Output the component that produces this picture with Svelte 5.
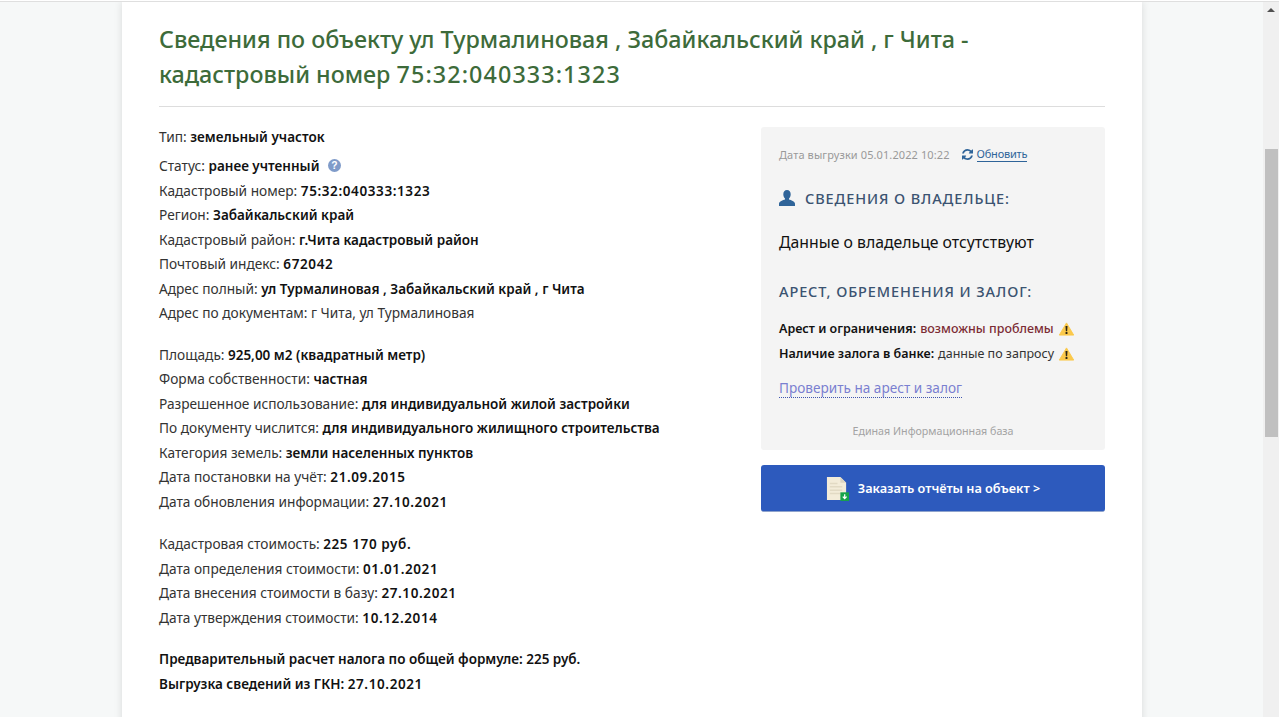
<script lang="ts">
    type Row = { label: string; value: string; plain?: boolean; help?: boolean; allBold?: boolean; num?: boolean };

    const groups: Row[][] = [
        [
            { label: "Тип", value: "земельный участок" },
            { label: "Статус", value: "ранее учтенный", help: true },
            { label: "Кадастровый номер", value: "75:32:040333:1323", num: true },
            { label: "Регион", value: "Забайкальский край" },
            { label: "Кадастровый район", value: "г.Чита кадастровый район" },
            { label: "Почтовый индекс", value: "672042", num: true },
            { label: "Адрес полный", value: "ул Турмалиновая , Забайкальский край , г Чита" },
            { label: "Адрес по документам", value: "г Чита, ул Турмалиновая", plain: true },
        ],
        [
            { label: "Площадь", value: "925,00 м2 (квадратный метр)" },
            { label: "Форма собственности", value: "частная" },
            { label: "Разрешенное использование", value: "для индивидуальной жилой застройки" },
            { label: "По документу числится", value: "для индивидуального жилищного строительства" },
            { label: "Категория земель", value: "земли населенных пунктов" },
            { label: "Дата постановки на учёт", value: "21.09.2015", num: true },
            { label: "Дата обновления информации", value: "27.10.2021", num: true },
        ],
        [
            { label: "Кадастровая стоимость", value: "225 170 руб.", num: true },
            { label: "Дата определения стоимости", value: "01.01.2021", num: true },
            { label: "Дата внесения стоимости в базу", value: "27.10.2021", num: true },
            { label: "Дата утверждения стоимости", value: "10.12.2014", num: true },
        ],
        [
            { label: "Предварительный расчет налога по общей формуле", value: "225 руб.", allBold: true },
            { label: "Выгрузка сведений из ГКН", value: "27.10.2021", allBold: true, num: true },
        ],
    ];
</script>

<div class="viewport">
    <div class="page">
        <main class="card">
            <h1>
                <span class="line">Сведения по объекту ул Турмалиновая , Забайкальский край , г Чита -</span>
                <span class="line"><span>кадастровый номер</span> <span class="h-num">75:32:040333:1323</span></span>
            </h1>
            <div class="columns">
                <section class="details">
                    {#each groups as group}
                        <div class="group">
                            {#each group as row}
                                <div class="row" class:strong={row.allBold}>
                                    {row.label}: <span class:val={!row.plain} class:num={row.num}>{row.value}</span>
                                    {#if row.help}
                                        <svg class="help" viewBox="0 0 12 12" width="13" height="13">
                                            <circle cx="6" cy="6" r="6" fill="#7f9bc9" />
                                            <text x="6" y="9.4" text-anchor="middle" font-size="9.5" font-weight="700" font-family="Liberation Sans, sans-serif" fill="#fff">?</text>
                                        </svg>
                                    {/if}
                                </div>
                            {/each}
                        </div>
                    {/each}
                </section>
                <aside class="side">
                    <div class="panel">
                        <div class="stamp">
                            <span class="stamp-date">Дата выгрузки 05.01.2022 10:22</span>
                            <svg class="refresh" viewBox="0 0 1536 1536" width="11" height="11">
                                <path fill="#2f6499" d="M1511 928q0 5-1 7-64 268-268 434.500T764 1536q-146 0-282.500-55T238 1324l-129 129q-19 19-45 19t-45-19-19-45V960q0-26 19-45t45-19h448q26 0 45 19t19 45-19 45l-137 137q71 66 161 102t187 36q134 0 250-65t186-179q11-17 53-117 8-23 30-23h192q13 0 22.500 9.500t9.500 22.500zM1536 128v448q0 26-19 45t-45 19h-448q-26 0-45-19t-19-45 19-45l138-138Q969 256 768 256q-134 0-250 65T332 500q-11 17-53 117-8 23-30 23H50q-13 0-22.500-9.500T18 608v-7q65-268 270-434.500T768 0q146 0 284 55.500T1297 212l130-129q19-19 45-19t45 19 19 45z" />
                            </svg>
                            <a href="#refresh">Обновить</a>
                        </div>
                        <h2 class="owner">
                            <svg viewBox="0 0 16 16" width="16" height="16">
                                <path fill="#2f6499" d="M8 0c2.300 0 3.700 1.800 3.700 4.200 0 1.700-.7 3.300-1.700 4.200v1.200c1.900.7 6 1.800 6 4.200V16H0v-2.200c0-2.400 4.100-3.500 6-4.200V8.400C5 7.500 4.300 5.900 4.300 4.200 4.300 1.800 5.700 0 8 0z" />
                            </svg>
                            Сведения о владельце:
                        </h2>
                        <p class="empty">Данные о владельце отсутствуют</p>
                        <h2 class="arrest">Арест, обременения и залог:</h2>
                        <div class="check">
                            <b>Арест и ограничения:</b> <span class="danger">возможны проблемы</span>
                            <svg class="warn" viewBox="0 0 16 14" width="15" height="14">
                                <path fill="#fbc94b" d="M8 .5 15.700 13.500H.3z" stroke="#fbc94b" stroke-linejoin="round" />
                                <path fill="#2b2413" d="M6.900 3.800h2.200L8.700 9.400H7.300zM7 10.300h2v1.900H7z" />
                            </svg>
                        </div>
                        <div class="check">
                            <b>Наличие залога в банке:</b> <span>данные по запросу</span>
                            <svg class="warn" viewBox="0 0 16 14" width="15" height="14">
                                <path fill="#fbc94b" d="M8 .5 15.700 13.500H.3z" stroke="#fbc94b" stroke-linejoin="round" />
                                <path fill="#2b2413" d="M6.900 3.800h2.200L8.700 9.400H7.300zM7 10.300h2v1.900H7z" />
                            </svg>
                        </div>
                        <a class="verify" href="#verify">Проверить на арест и залог</a>
                        <div class="base">Единая Информационная база</div>
                    </div>
                    <button class="order">
                        <svg viewBox="0 0 24 26" width="23" height="25">
                            <path fill="#f3ecd9" d="M1 1h14l6 6v18H1z" />
                            <path fill="#dcd5c2" d="M15 1l6 6h-6z" />
                            <path fill="#e2dac4" d="M4 7h8v1.500H4zM4 10.500h13V12H4zM4 14h13v1.500H4zM4 17.500h11V19H4z" />
                            <rect x="15" y="17" width="9" height="9" fill="#17a34a" />
                            <path fill="none" stroke="#fff" stroke-width="1.300" d="M19.500 19v4.500M17.500 21.500l2 2 2-2" />
                        </svg>
                        Заказать отчёты на объект &gt;
                    </button>
                </aside>
            </div>
        </main>
    </div>
    <div class="scrollbar">
        <div class="arrow"></div>
        <div class="track"><div class="thumb"></div></div>
    </div>
</div>

<style>
    :global(body) {
        margin: 0;
        overflow: hidden;
    }

    .viewport {
        display: flex;
        height: 717px;
        box-sizing: border-box;
        padding-top: 1px;
        overflow: hidden;
        font-family: "Noto Sans", "Open Sans", sans-serif;
        color: #222;
    }

    .viewport > * {
        border-top: 1px solid #dfdfdf;
    }

    .page {
        flex: 1;
        min-width: 0;
        overflow: hidden;
        background: #f6f8f8;
        display: flex;
        justify-content: center;
        padding-left: 1px;
    }

    .card {
        width: 1020px;
        height: 800px;
        flex: none;
        background: #fff;
        box-sizing: border-box;
        padding: 20px 37px 0;
        box-shadow: 0 0 8px rgba(0, 0, 0, 0.12);
    }

    h1 {
        margin: 0;
        padding-bottom: 14px;
        border-bottom: 1px solid #ddd;
        font-size: 23.300px;
        line-height: 35px;
        font-weight: 500;
        color: #3d6b3a;
    }

    .line {
        display: block;
    }

    .h-num {
        letter-spacing: 1.100px;
    }

    .columns {
        display: flex;
        justify-content: space-between;
        padding-top: 18px;
    }

    .details {
        width: 560px;
        font-size: 13.7px;
        color: #333;
    }

    .group {
        margin-bottom: 17px;
    }

    .group:nth-child(2) {
        margin-bottom: 18px;
    }

    .row {
        line-height: 24.500px;
    }

    .group:first-child .row:first-child {
        margin-bottom: 4.500px;
    }

    .val,
    .strong {
        font-size: 13.500px;
        font-weight: 600;
        color: #111;
    }

    .num {
        letter-spacing: 0.6px;
    }

    .help {
        margin-left: 5px;
        vertical-align: -1px;
    }

    .side {
        width: 344px;
        padding-top: 2px;
    }

    .panel {
        height: 323px;
        box-sizing: border-box;
        padding: 19px 18px 0;
        background: #f4f4f4;
        border-radius: 3px;
    }

    .stamp {
        display: flex;
        align-items: center;
        font-size: 11px;
        line-height: 15px;
        color: #999;
    }

    .stamp-date {
        letter-spacing: 0.1px;
    }

    .refresh {
        margin-left: 12px;
        margin-right: 4px;
    }

    .stamp a {
        color: #2f6499;
        letter-spacing: -0.2px;
        text-decoration: none;
        border-bottom: 1px solid #2f6499;
    }

    h2 {
        margin: 0;
        font-size: 14.500px;
        font-weight: 500;
        letter-spacing: 0.9px;
        text-transform: uppercase;
        color: #3b5371;
    }

    .owner {
        display: flex;
        align-items: center;
        gap: 10px;
        margin-top: 26px;
        line-height: 20px;
    }

    .empty {
        margin: 24px 0 0;
        font-size: 15.800px;
        line-height: 20px;
        color: #111;
    }

    .arrest {
        margin-top: 29px;
        margin-bottom: 15px;
        line-height: 20px;
    }

    .check {
        display: flex;
        align-items: center;
        gap: 4px;
        font-size: 12.500px;
        line-height: 25px;
        color: #333;
    }

    .check b {
        font-weight: 600;
        color: #111;
    }

    .danger {
        color: #7c2c34;
        font-weight: 500;
    }

    .warn {
        margin-left: 1px;
    }

    .verify {
        display: inline-block;
        margin-top: 12px;
        font-size: 13.600px;
        line-height: 19px;
        color: #7a7fd0;
        text-decoration: none;
        border-bottom: 1px dotted #3f55b0;
    }

    .base {
        margin-top: 26px;
        text-align: center;
        font-size: 10.700px;
        color: #a3a3a3;
    }

    .order {
        display: flex;
        align-items: center;
        justify-content: center;
        gap: 9px;
        width: 100%;
        height: 47px;
        margin-top: 15px;
        padding: 0;
        border: 0;
        border-bottom: 1px solid #8fa3cc;
        border-radius: 3px;
        background: #2d5abd;
        color: #fff;
        font-family: inherit;
        font-size: 12.700px;
        font-weight: 600;
    }

    .scrollbar {
        width: 16px;
        flex: none;
        background: #f0f0f0;
        display: flex;
        flex-direction: column;
    }

    .track {
        flex: 1;
        padding-top: 130px;
    }

    .thumb {
        width: 13px;
        height: 288px;
        margin-left: 2px;
        background: #c0c0c0;
    }

    .arrow {
        height: 17px;
        flex: none;
        position: relative;
    }

    .arrow::after {
        content: "";
        position: absolute;
        left: 4px;
        top: 6px;
        border-left: 4px solid transparent;
        border-right: 4px solid transparent;
        border-bottom: 4px solid #505050;
    }
</style>
